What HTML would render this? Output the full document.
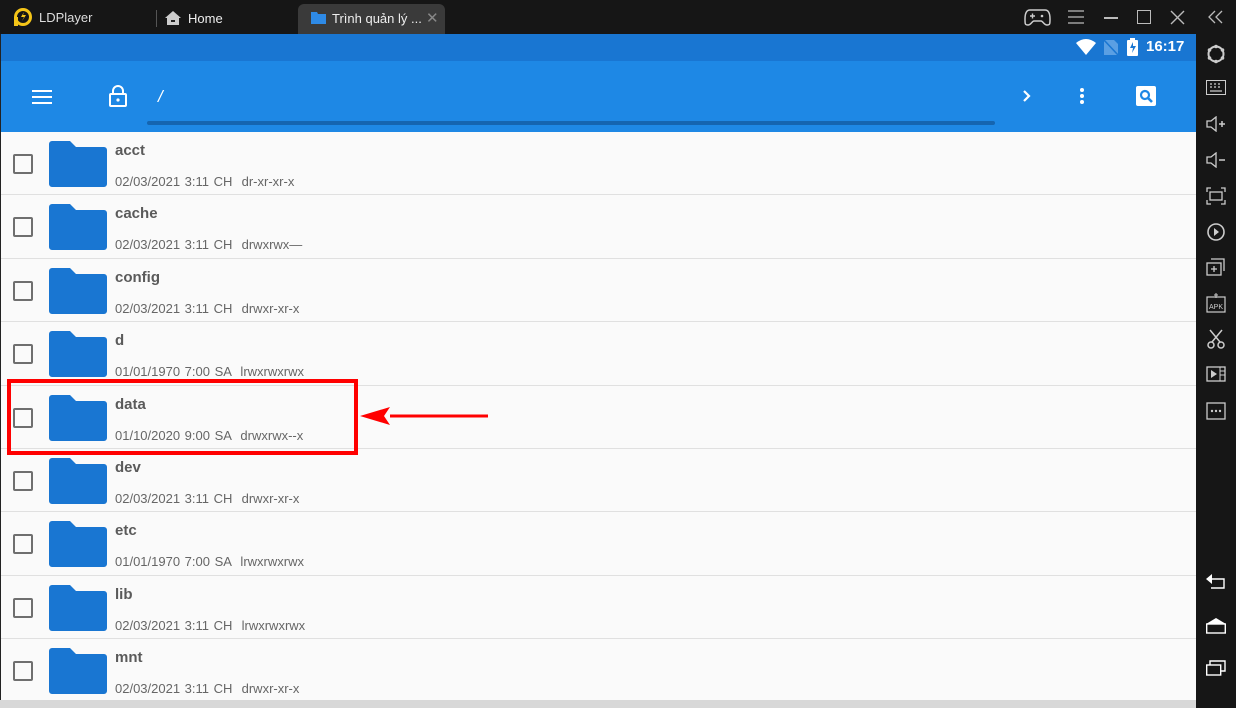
<!DOCTYPE html><html><head><meta charset="utf-8"><style>
*{margin:0;padding:0;box-sizing:border-box}
body{width:1236px;height:708px;overflow:hidden;background:#161616;font-family:"Liberation Sans","Noto Sans CJK SC",sans-serif;position:relative}
.abs{position:absolute}
.title{left:0;top:0;width:1236px;height:34px;background:#161616;color:#ddd;font-size:13px}
.status{left:1px;top:34px;width:1195px;height:27px;background:#1976d2}
.tool{left:1px;top:61px;width:1195px;height:71px;background:#1e88e5}
.list{left:1px;top:132px;width:1195px;height:568px;background:#fafafa;overflow:hidden}
.row{position:absolute;left:0;width:1195px;height:63.4px;border-bottom:1px solid #e0e0e0}
.cb{position:absolute;left:12px;top:22px;width:20px;height:20px;border:2px solid #6f6f6f;border-radius:2px}
.fold{position:absolute;left:48px;top:9px}
.nm{position:absolute;left:114px;top:10px;font-size:15px;font-weight:bold;color:#5a5a5a}
.mt{position:absolute;left:114px;top:42px;font-size:13px;color:#666;word-spacing:1px}
.side svg{display:block}
</style></head><body>
<div class="abs title">
 <svg class="abs" style="left:12px;top:8px" width="20" height="20" viewBox="0 0 20 20"><circle cx="11" cy="9" r="7.5" fill="none" stroke="#f5c518" stroke-width="3"/><rect x="2" y="9" width="4" height="9" fill="#f5c518"/><path d="M12 4l-3 5h3l-2 4 4-6h-3z" fill="#f5c518"/></svg>
 <span class="abs" style="left:39px;top:10px">LDPlayer</span>
 <div class="abs" style="left:156px;top:10px;width:1px;height:17px;background:#555"></div>
 <svg class="abs" style="left:165px;top:11px" width="16" height="14" viewBox="0 0 16 14"><path d="M8 0L0 7h2v7h12V7h2z" fill="#ccc"/><rect x="6" y="9" width="4" height="2" fill="#222"/></svg>
 <span class="abs" style="left:188px;top:11px;color:#eee">Home</span>
 <div class="abs" style="left:298px;top:4px;width:147px;height:30px;background:#3a3a3a;border-radius:6px 6px 0 0"></div>
 <svg class="abs" style="left:311px;top:12px" width="15" height="12" viewBox="0 0 15 12"><path d="M0 0h6l1 2h8v10H0z" fill="#2e8ae6"/></svg>
 <span class="abs" style="left:332px;top:11px;color:#eee">Trình quản lý ...</span>
 <span class="abs" style="left:426px;top:9px;color:#888;font-size:15px">✕</span>
 <svg class="abs" style="left:1024px;top:9px" width="27" height="17" viewBox="0 0 27 17"><path d="M6 1h15c4 0 5 4 5 9s0 6-3 6-4-4-6-4h-7c-2 0-3 4-6 4s-3-1-3-6 1-9 5-9z" fill="none" stroke="#ccc" stroke-width="1.5"/><path d="M6 7h5M8.5 4.5v5" stroke="#ccc" stroke-width="1.4"/><circle cx="18" cy="7" r="1.3" fill="#ccc"/></svg>
 <svg class="abs" style="left:1068px;top:10px" width="16" height="14"><path d="M0 1h16M0 7h16M0 13h16" stroke="#bbb" stroke-width="1.3"/></svg>
 <div class="abs" style="left:1104px;top:17px;width:14px;height:1.5px;background:#bbb"></div>
 <div class="abs" style="left:1137px;top:10px;width:14px;height:14px;border:1.5px solid #bbb"></div>
 <svg class="abs" style="left:1170px;top:10px" width="15" height="15"><path d="M1 1l13 13M14 1L1 14" stroke="#bbb" stroke-width="1.4"/></svg>
 <svg class="abs" style="left:1208px;top:10px" width="15" height="14"><path d="M7 1L1 7l6 6M14 1L8 7l6 6" stroke="#bbb" stroke-width="1.3" fill="none"/></svg>
</div>
<div class="abs" style="left:0;top:34px;width:1px;height:674px;background:#222"></div>
<div class="abs status">
 <svg class="abs" style="left:1075px;top:5px" width="20" height="16" viewBox="0 0 20 16"><path d="M0 4Q10-4 20 4L10 16z" fill="#fff"/></svg>
 <svg class="abs" style="left:1103px;top:6px" width="14" height="15"><path d="M0 0h10l4 4v11H0z" fill="#5a9fe3"/><path d="M0 0l14 15" stroke="#1976d2" stroke-width="1.5"/></svg>
 <svg class="abs" style="left:1126px;top:4px" width="11" height="18"><rect x="3" y="0" width="5" height="2" fill="#fff"/><rect x="0" y="2" width="11" height="16" rx="1" fill="#fff"/><path d="M6 4l-3 6h3l-1 5 4-7H6z" fill="#1976d2"/></svg>
 <span class="abs" style="left:1145px;top:4px;color:#fff;font-size:15px;font-weight:bold">16:17</span>
</div>
<div class="abs tool">
 <svg class="abs" style="left:31px;top:29px" width="20" height="14"><path d="M0 1h20M0 7h20M0 13h20" stroke="#fff" stroke-width="2"/></svg>
 <svg class="abs" style="left:108px;top:24px" width="18" height="22" viewBox="0 0 18 22"><path d="M4 9V6a5 5 0 0 1 10 0v3" fill="none" stroke="#fff" stroke-width="2"/><rect x="1" y="9" width="16" height="12" rx="1" fill="none" stroke="#fff" stroke-width="2"/><circle cx="9" cy="15" r="1.6" fill="#fff"/></svg>
 <span class="abs" style="left:157px;top:26px;color:#fff;font-size:17px;font-style:italic">/</span>
 <div class="abs" style="left:146px;top:60px;width:848px;height:4px;background:#1565b0;border-radius:2px"></div>
 <svg class="abs" style="left:1021px;top:28px" width="10" height="14"><path d="M2 2l5 5-5 5" stroke="#fff" stroke-width="2.2" fill="none"/></svg>
 <svg class="abs" style="left:1078px;top:26px" width="6" height="18"><circle cx="3" cy="3" r="2" fill="#fff"/><circle cx="3" cy="9" r="2" fill="#fff"/><circle cx="3" cy="15" r="2" fill="#fff"/></svg>
 <svg class="abs" style="left:1135px;top:25px" width="20" height="20"><rect width="20" height="20" rx="2" fill="#fff"/><circle cx="9" cy="9" r="4" fill="none" stroke="#1e88e5" stroke-width="2.2"/><path d="M12 12l4 4" stroke="#1e88e5" stroke-width="2.6"/></svg>
</div>
<div class="abs list">
<div class="row" style="top:0"><div class="cb"></div><svg class="fold" width="58" height="46" viewBox="0 0 58 46"><path d="M3 0h18l6 6h28a3 3 0 0 1 3 3v34a3 3 0 0 1-3 3H3a3 3 0 0 1-3-3V3a3 3 0 0 1 3-3z" fill="#1976d2"/></svg><div class="nm">acct</div><div class="mt">02/03/2021 3:11 CH &nbsp;dr-xr-xr-x</div></div>
<div class="row" style="top:63.4px"><div class="cb"></div><svg class="fold" width="58" height="46" viewBox="0 0 58 46"><path d="M3 0h18l6 6h28a3 3 0 0 1 3 3v34a3 3 0 0 1-3 3H3a3 3 0 0 1-3-3V3a3 3 0 0 1 3-3z" fill="#1976d2"/></svg><div class="nm">cache</div><div class="mt">02/03/2021 3:11 CH &nbsp;drwxrwx—</div></div>
<div class="row" style="top:126.8px"><div class="cb"></div><svg class="fold" width="58" height="46" viewBox="0 0 58 46"><path d="M3 0h18l6 6h28a3 3 0 0 1 3 3v34a3 3 0 0 1-3 3H3a3 3 0 0 1-3-3V3a3 3 0 0 1 3-3z" fill="#1976d2"/></svg><div class="nm">config</div><div class="mt">02/03/2021 3:11 CH &nbsp;drwxr-xr-x</div></div>
<div class="row" style="top:190.2px"><div class="cb"></div><svg class="fold" width="58" height="46" viewBox="0 0 58 46"><path d="M3 0h18l6 6h28a3 3 0 0 1 3 3v34a3 3 0 0 1-3 3H3a3 3 0 0 1-3-3V3a3 3 0 0 1 3-3z" fill="#1976d2"/></svg><div class="nm">d</div><div class="mt">01/01/1970 7:00 SA &nbsp;lrwxrwxrwx</div></div>
<div class="row" style="top:253.6px"><div class="cb"></div><svg class="fold" width="58" height="46" viewBox="0 0 58 46"><path d="M3 0h18l6 6h28a3 3 0 0 1 3 3v34a3 3 0 0 1-3 3H3a3 3 0 0 1-3-3V3a3 3 0 0 1 3-3z" fill="#1976d2"/></svg><div class="nm">data</div><div class="mt">01/10/2020 9:00 SA &nbsp;drwxrwx--x</div></div>
<div class="row" style="top:317px"><div class="cb"></div><svg class="fold" width="58" height="46" viewBox="0 0 58 46"><path d="M3 0h18l6 6h28a3 3 0 0 1 3 3v34a3 3 0 0 1-3 3H3a3 3 0 0 1-3-3V3a3 3 0 0 1 3-3z" fill="#1976d2"/></svg><div class="nm">dev</div><div class="mt">02/03/2021 3:11 CH &nbsp;drwxr-xr-x</div></div>
<div class="row" style="top:380.4px"><div class="cb"></div><svg class="fold" width="58" height="46" viewBox="0 0 58 46"><path d="M3 0h18l6 6h28a3 3 0 0 1 3 3v34a3 3 0 0 1-3 3H3a3 3 0 0 1-3-3V3a3 3 0 0 1 3-3z" fill="#1976d2"/></svg><div class="nm">etc</div><div class="mt">01/01/1970 7:00 SA &nbsp;lrwxrwxrwx</div></div>
<div class="row" style="top:443.8px"><div class="cb"></div><svg class="fold" width="58" height="46" viewBox="0 0 58 46"><path d="M3 0h18l6 6h28a3 3 0 0 1 3 3v34a3 3 0 0 1-3 3H3a3 3 0 0 1-3-3V3a3 3 0 0 1 3-3z" fill="#1976d2"/></svg><div class="nm">lib</div><div class="mt">02/03/2021 3:11 CH &nbsp;lrwxrwxrwx</div></div>
<div class="row" style="top:507.2px"><div class="cb"></div><svg class="fold" width="58" height="46" viewBox="0 0 58 46"><path d="M3 0h18l6 6h28a3 3 0 0 1 3 3v34a3 3 0 0 1-3 3H3a3 3 0 0 1-3-3V3a3 3 0 0 1 3-3z" fill="#1976d2"/></svg><div class="nm">mnt</div><div class="mt">02/03/2021 3:11 CH &nbsp;drwxr-xr-x</div></div>
</div>
<div class="abs" style="left:0;top:700px;width:1196px;height:8px;background:#d8d8d8"></div>
<div class="abs" style="left:7px;top:379px;width:351px;height:76px;border:4px solid #f00"></div>
<svg class="abs" style="left:358px;top:405px" width="132" height="22"><path d="M32 11h98" stroke="#f00" stroke-width="3"/><path d="M2 11l30-9-6 9 6 9z" fill="#f00"/></svg>
<div class="abs side" style="left:1196px;top:34px;width:40px;height:674px;background:#161616">
 <svg class="abs" style="left:10px;top:10px" width="20" height="20"><circle cx="10" cy="10" r="7.5" fill="none" stroke="#ccc" stroke-width="2"/><circle cx="10" cy="2.5" r="1.8" fill="#ccc"/><circle cx="10" cy="17.5" r="1.8" fill="#ccc"/><circle cx="3.5" cy="6" r="1.8" fill="#ccc"/><circle cx="16.5" cy="6" r="1.8" fill="#ccc"/><circle cx="3.5" cy="14" r="1.8" fill="#ccc"/><circle cx="16.5" cy="14" r="1.8" fill="#ccc"/></svg>
 <svg class="abs" style="left:10px;top:46px" width="20" height="16"><rect x="0.5" y="0.5" width="19" height="14" fill="none" stroke="#ccc"/><path d="M4 4h2M8 4h2M12 4h2M4 7h2M8 7h2M12 7h2M4 11h12" stroke="#ccc" stroke-width="1.3"/></svg>
 <svg class="abs" style="left:10px;top:82px" width="22" height="16"><path d="M1 5h4l5-4v14l-5-4H1z" fill="none" stroke="#ccc" stroke-width="1.3"/><path d="M13 8h6M16 5v6" stroke="#ccc" stroke-width="1.5"/></svg>
 <svg class="abs" style="left:10px;top:118px" width="22" height="16"><path d="M1 5h4l5-4v14l-5-4H1z" fill="none" stroke="#ccc" stroke-width="1.3"/><path d="M13 8h6" stroke="#ccc" stroke-width="1.5"/></svg>
 <svg class="abs" style="left:10px;top:153px" width="20" height="18"><path d="M1 5V1h4M15 1h4v4M19 13v4h-4M5 17H1v-4" fill="none" stroke="#ccc" stroke-width="1.3"/><rect x="4" y="5" width="12" height="8" fill="none" stroke="#ccc" stroke-width="1.3"/></svg>
 <svg class="abs" style="left:10px;top:188px" width="20" height="20"><circle cx="10" cy="10" r="8" fill="none" stroke="#ccc" stroke-width="1.6"/><path d="M8 6l5 4-5 4z" fill="#ccc"/></svg>
 <svg class="abs" style="left:10px;top:224px" width="20" height="18"><rect x="1" y="5" width="14" height="12" fill="none" stroke="#ccc" stroke-width="1.3"/><path d="M5 1h13v12M8 8v6M5 11h6" stroke="#ccc" stroke-width="1.3" fill="none"/></svg>
 <svg class="abs" style="left:10px;top:259px" width="20" height="20"><rect x="1" y="4" width="18" height="15" fill="none" stroke="#ccc" stroke-width="1.2"/><path d="M10 0v5M8 2h4" stroke="#ccc"/><text x="3" y="16" font-size="7" fill="#ccc" font-family="Liberation Sans">APK</text></svg>
 <svg class="abs" style="left:10px;top:295px" width="20" height="20"><path d="M4 1l10 12M16 1L6 13" stroke="#ccc" stroke-width="1.5"/><circle cx="5" cy="16" r="3" fill="none" stroke="#ccc" stroke-width="1.5"/><circle cx="15" cy="16" r="3" fill="none" stroke="#ccc" stroke-width="1.5"/></svg>
 <svg class="abs" style="left:10px;top:332px" width="20" height="16"><rect x="1" y="1" width="18" height="14" fill="none" stroke="#ccc" stroke-width="1.3"/><path d="M5 4l6 4-6 4z" fill="#ccc"/><path d="M14 1v14M14 5h5M14 9h5" stroke="#ccc"/></svg>
 <svg class="abs" style="left:10px;top:368px" width="20" height="18"><rect x="1" y="1" width="18" height="16" fill="none" stroke="#ccc" stroke-width="1.3"/><circle cx="6" cy="9" r="1.2" fill="#ccc"/><circle cx="10" cy="9" r="1.2" fill="#ccc"/><circle cx="14" cy="9" r="1.2" fill="#ccc"/></svg>
 <svg class="abs" style="left:10px;top:540px" width="20" height="16"><path d="M0 5l6-5v10z" fill="#fff"/><path d="M5 5h13v9H5" fill="none" stroke="#fff" stroke-width="1.4"/></svg>
 <svg class="abs" style="left:10px;top:584px" width="20" height="16"><path d="M0 6l10-6 10 6z" fill="#fff"/><rect x="0.7" y="6" width="18.6" height="9" fill="none" stroke="#fff" stroke-width="1.4"/></svg>
 <svg class="abs" style="left:10px;top:626px" width="20" height="16"><rect x="0.7" y="5" width="14" height="10" fill="none" stroke="#fff" stroke-width="1.4"/><path d="M4 5V1h15v10h-4" fill="none" stroke="#fff" stroke-width="1.4"/></svg>
</div>
</body></html>
